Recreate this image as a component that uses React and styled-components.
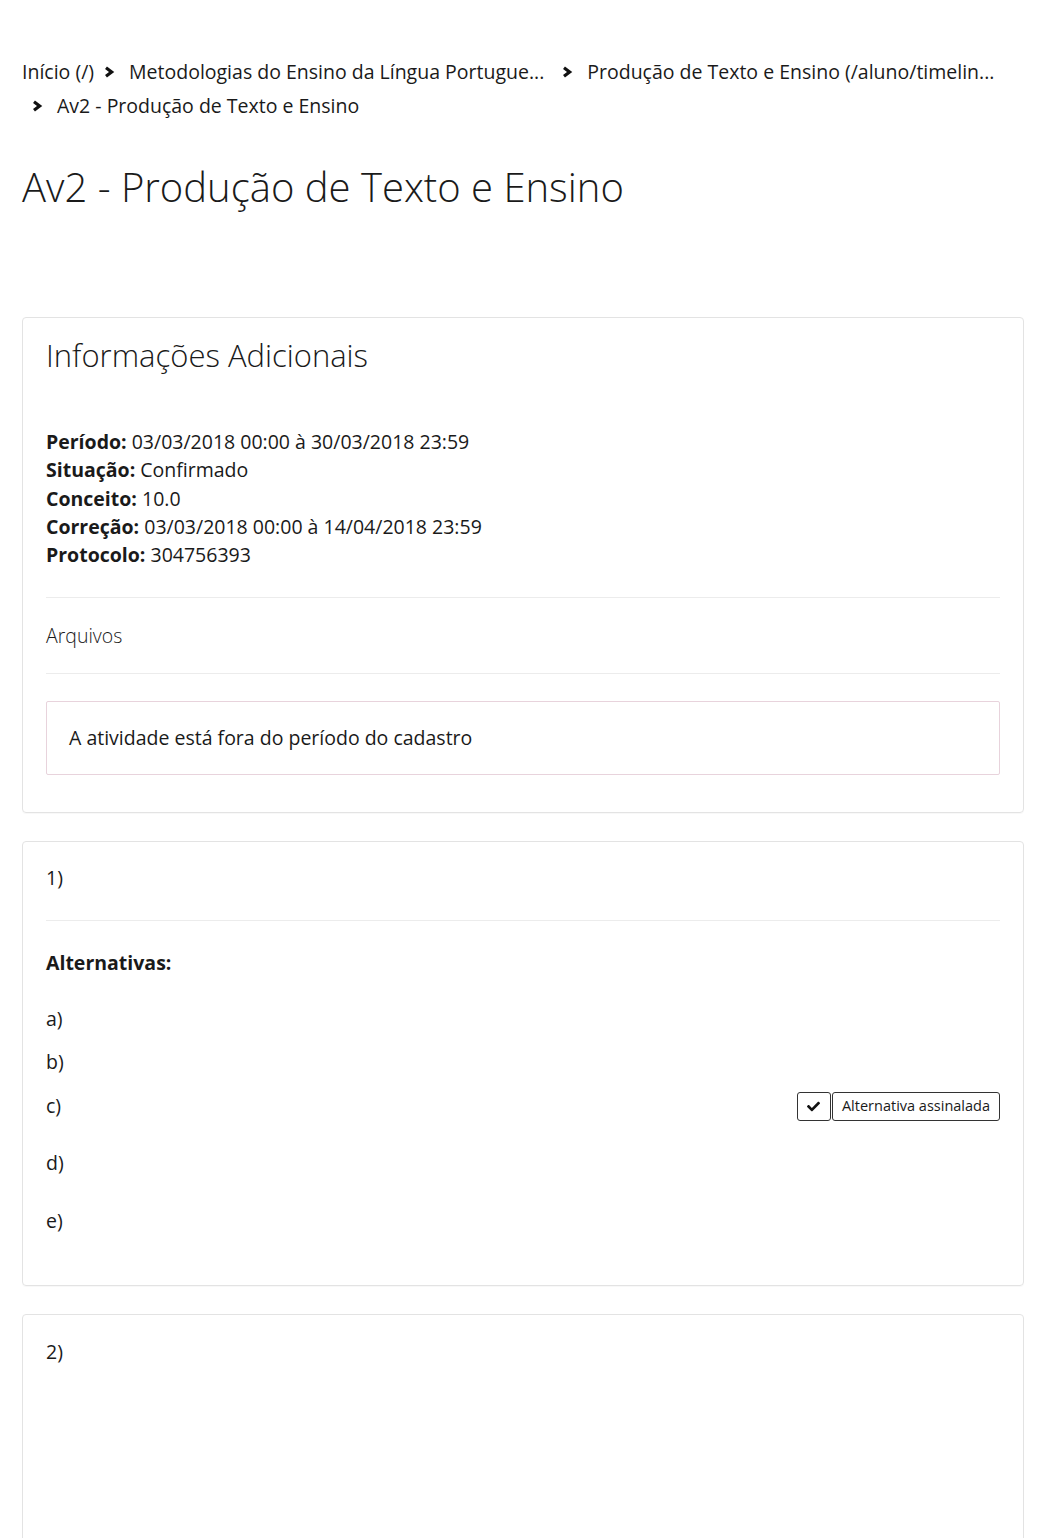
import React from 'react';
import styled, { createGlobalStyle } from 'styled-components';
import { FaCheck } from 'react-icons/fa';

const GlobalStyle = createGlobalStyle`
  body {
    margin: 0;
    background: #fff;
    color: #1a1a1a;
    font-family: "Open Sans", "Liberation Sans", sans-serif;
    font-size: 19.5px;
    line-height: 28px;
  }
`;

const Page = styled.div`
  padding: 55px 22px 0 22px;
`;

const Breadcrumb = styled.nav`
  display: flex;
  flex-wrap: wrap;
  align-items: center;
  line-height: 34px;
  color: #1a1a1a;
`;

const Crumb = styled.span`
  display: inline-flex;
  align-items: center;
  white-space: nowrap;
  padding-right: ${p => (p.$cut ? '8px' : '0')};
`;

const SepIcon = styled.svg`
  width: 12px;
  height: 12px;
  margin: 0 14px 0 9px;
  flex-shrink: 0;
`;

const Sep = () => (
  <SepIcon viewBox="0 0 12 12">
    <path d="M3 1.8 L8.6 6 L3 10.2" fill="none" stroke="#111" strokeWidth="3.2" strokeLinejoin="miter" />
  </SepIcon>
);

const Title = styled.h1`
  margin: 36px 0 0 0;
  font-size: 40px;
  line-height: 56px;
  font-weight: 300;
  color: #1a1a1a;
`;

const Card = styled.section`
  border: 1px solid #e3e3e3;
  border-radius: 4px;
  padding: ${p => p.$pad || '22px 23px 37px'};
  margin-top: ${p => p.$top || '28px'};
  min-height: ${p => p.$minH || 'auto'};
  box-shadow: 0 1px 1px rgba(0, 0, 0, 0.03);
`;

const CardHeading = styled.h2`
  margin: 0;
  font-size: 31px;
  line-height: 30px;
  font-weight: 300;
  color: #1a1a1a;
`;

const InfoList = styled.div`
  margin-top: 58px;
`;

const InfoLine = styled.div`
  line-height: 28.3px;
`;

const Label = styled.strong`
  font-weight: 700;
`;

const Rule = styled.hr`
  border: 0;
  border-top: 1px solid #ececec;
  margin: ${p => p.$m || '28px 0'};
`;

const Files = styled.div`
  font-weight: 300;
`;

const Alert = styled.div`
  border: 1px solid #e8d3dc;
  border-radius: 2px;
  padding: 22px 22px;
  color: #1a1a1a;
`;

const Number = styled.div``;

const AltTitle = styled.div`
  font-weight: 700;
`;

const AltList = styled.div`
  margin-top: 28px;
  display: flex;
  flex-direction: column;
`;

const AltRow = styled.div`
  display: flex;
  align-items: center;
  justify-content: space-between;
  margin-top: ${p => p.$gap}px;
  height: 28px;
`;

const Marked = styled.div`
  display: flex;
  align-items: stretch;
  height: 29px;
  font-size: 14.5px;
  line-height: 1;
`;

const MarkIcon = styled.span`
  display: flex;
  align-items: center;
  justify-content: center;
  width: 32px;
  border: 1px solid #333;
  border-radius: 3px;
  font-size: 13px;
  color: #111;
`;

const MarkText = styled.span`
  display: flex;
  align-items: center;
  padding: 0 9px;
  border: 1px solid #333;
  border-radius: 3px;
  margin-left: 1px;
  color: #1a1a1a;
`;

const alternatives = [
  { letter: 'a)', gap: 0 },
  { letter: 'b)', gap: 15 },
  { letter: 'c)', gap: 16, marked: true },
  { letter: 'd)', gap: 29 },
  { letter: 'e)', gap: 30 },
];

const info = [
  ['Período:', '03/03/2018 00:00 à 30/03/2018 23:59'],
  ['Situação:', 'Confirmado'],
  ['Conceito:', '10.0'],
  ['Correção:', '03/03/2018 00:00 à 14/04/2018 23:59'],
  ['Protocolo:', '304756393'],
];

const App = () => {
  return (
    <>
      <GlobalStyle />
      <Page>
        <Breadcrumb>
          <Crumb>Início (/)</Crumb>
          <Crumb $cut><Sep />Metodologias do Ensino da Língua Portugue...</Crumb>
          <Crumb $cut><Sep />Produção de Texto e Ensino (/aluno/timelin...</Crumb>
          <Crumb><Sep />Av2 - Produção de Texto e Ensino</Crumb>
        </Breadcrumb>

        <Title>Av2 - Produção de Texto e Ensino</Title>

        <Card $top="102px">
          <CardHeading>Informações Adicionais</CardHeading>
          <InfoList>
            {info.map(([k, v]) => (
              <InfoLine key={k}>
                <Label>{k}</Label> {v}
              </InfoLine>
            ))}
          </InfoList>
          <Rule $m="28px 0 24px" />
          <Files>Arquivos</Files>
          <Rule $m="23px 0 27px" />
          <Alert>A atividade está fora do período do cadastro</Alert>
        </Card>

        <Card $pad="22px 23px 50px">
          <Number>1)</Number>
          <Rule />
          <AltTitle>Alternativas:</AltTitle>
          <AltList>
            {alternatives.map(a => (
              <AltRow key={a.letter} $gap={a.gap}>
                <span>{a.letter}</span>
                {a.marked && (
                  <Marked>
                    <MarkIcon><FaCheck /></MarkIcon>
                    <MarkText>Alternativa assinalada</MarkText>
                  </Marked>
                )}
              </AltRow>
            ))}
          </AltList>
        </Card>

        <Card $pad="23px 23px 38px" $minH="300px">
          <Number>2)</Number>
        </Card>
      </Page>
    </>
  );
};

export default App;
